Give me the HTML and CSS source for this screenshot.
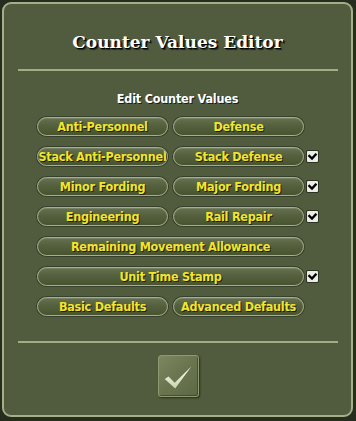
FILE: index.html
```html
<!DOCTYPE html>
<html lang="en">
<head>
<meta charset="utf-8">
<title>Counter Values Editor</title>
<link rel="stylesheet" href="styles.css">
</head>
<body>
<div class="panel">
  <h1 class="title">Counter Values Editor</h1>
  <div class="rule"></div>
  <div class="subtitle">Edit Counter Values</div>
  <div class="grid">
    <button class="btn">Anti-Personnel</button>
    <button class="btn">Defense</button>
    <span></span>

    <button class="btn">Stack Anti-Personnel</button>
    <button class="btn">Stack Defense</button>
    <span class="check"><svg viewBox="0 0 11 11" width="11" height="11"><path d="M2.4 5 L5 7.6 L8.6 3.6" fill="none" stroke="#000" stroke-width="2.4" stroke-linecap="square"/></svg></span>

    <button class="btn">Minor Fording</button>
    <button class="btn">Major Fording</button>
    <span class="check"><svg viewBox="0 0 11 11" width="11" height="11"><path d="M2.4 5 L5 7.6 L8.6 3.6" fill="none" stroke="#000" stroke-width="2.4" stroke-linecap="square"/></svg></span>

    <button class="btn">Engineering</button>
    <button class="btn">Rail Repair</button>
    <span class="check"><svg viewBox="0 0 11 11" width="11" height="11"><path d="M2.4 5 L5 7.6 L8.6 3.6" fill="none" stroke="#000" stroke-width="2.4" stroke-linecap="square"/></svg></span>

    <button class="btn wide">Remaining Movement Allowance</button>
    <span></span>

    <button class="btn wide">Unit Time Stamp</button>
    <span class="check"><svg viewBox="0 0 11 11" width="11" height="11"><path d="M2.4 5 L5 7.6 L8.6 3.6" fill="none" stroke="#000" stroke-width="2.4" stroke-linecap="square"/></svg></span>

    <button class="btn">Basic Defaults</button>
    <button class="btn">Advanced Defaults</button>
    <span></span>
  </div>
  <div class="rule rule-bottom"></div>
  <div class="ok-row">
    <button class="ok" aria-label="OK">
      <svg viewBox="0 0 41 42" width="41" height="42">
        <defs>
          <linearGradient id="ck" x1="0" y1="0" x2="0" y2="1">
            <stop offset="0" stop-color="#ffffff"/>
            <stop offset="1" stop-color="#c9d3a8"/>
          </linearGradient>
        </defs>
        <path d="M6 23 L10 20.5 L16.5 27 L34 10 L17 33 Z" fill="url(#ck)"/>
      </svg>
    </button>
  </div>
</div>
</body>
</html>
```
FILE: styles.css
```css
html, body {
  margin: 0;
  padding: 0;
}
body {
  background: #262d1e;
  width: 356px;
  height: 421px;
  overflow: hidden;
}
.panel {
  box-sizing: border-box;
  margin: 2px 0 0 2px;
  width: 351px;
  height: 415px;
  border: 2px solid #a4ae88;
  border-radius: 9px;
  background: #515c3e;
  display: flex;
  flex-direction: column;
  align-items: center;
}
.title {
  margin: 28px 0 0;
  height: 20px;
  line-height: 20px;
  font-family: "DejaVu Serif", "Liberation Serif", serif;
  font-weight: bold;
  font-size: 17px;
  letter-spacing: 0;
  color: #ffffff;
  text-shadow: 1px 1px 0 #000, 2px 2px 1px rgba(0,0,0,0.6);
}
.rule {
  margin-top: 17px;
  width: 320px;
  height: 2px;
  background: #a2ad84;
}
.subtitle {
  margin-top: 20px;
  height: 16px;
  line-height: 16px;
  font-family: "DejaVu Sans Condensed", "DejaVu Sans", sans-serif;
  font-weight: bold;
  font-size: 12.5px;
  letter-spacing: -0.2px;
  color: #ffffff;
  text-shadow: 1px 1px 0 #1a1f12;
}
.grid {
  margin-top: 10px;
  align-self: flex-start;
  margin-left: 33px;
  display: grid;
  grid-template-columns: 131px 131px 11px;
  column-gap: 5px;
  row-gap: 11px;
  grid-auto-rows: 19px;
  align-items: center;
}
.btn {
  box-sizing: border-box;
  height: 19px;
  padding: 0;
  border: 1.5px solid #a6ae8c;
  border-radius: 10px;
  background: linear-gradient(#667150 0%, #55603f 45%, #48532f 100%);
  box-shadow: 0 0 0 1px rgba(30,36,22,0.5), inset 0 1px 0 rgba(255,255,255,0.12);
  font-family: "DejaVu Sans Condensed", "DejaVu Sans", sans-serif;
  font-weight: bold;
  font-size: 12.5px;
  letter-spacing: -0.25px;
  line-height: 16px;
  color: #f3e52c;
  text-shadow: 1px 1px 0 #1b1d0c;
  white-space: nowrap;
  overflow: hidden;
}
.wide {
  grid-column: 1 / 3;
}
.check {
  width: 11px;
  height: 11px;
  margin-left: -2px;
  background: #ecece6;
  border-radius: 1px;
  box-shadow: 0 0 0 1px rgba(20,24,14,0.6);
  display: flex;
}
.check svg {
  display: block;
}
.rule-bottom {
  margin-top: 25px;
}
.ok-row {
  margin-top: 12px;
  display: flex;
  justify-content: center;
  width: 100%;
}
.ok {
  box-sizing: border-box;
  width: 41px;
  height: 42px;
  padding: 0;
  margin-left: 1px;
  border: 1px solid #8f9a72;
  border-radius: 3px;
  background: linear-gradient(135deg, #7c8761 0%, #6a7550 50%, #5c6745 100%);
  box-shadow: 1px 1px 2px rgba(20,24,14,0.7), inset -1px -1px 0 rgba(40,46,30,0.5);
  display: flex;
}
.ok svg {
  display: block;
}
```
